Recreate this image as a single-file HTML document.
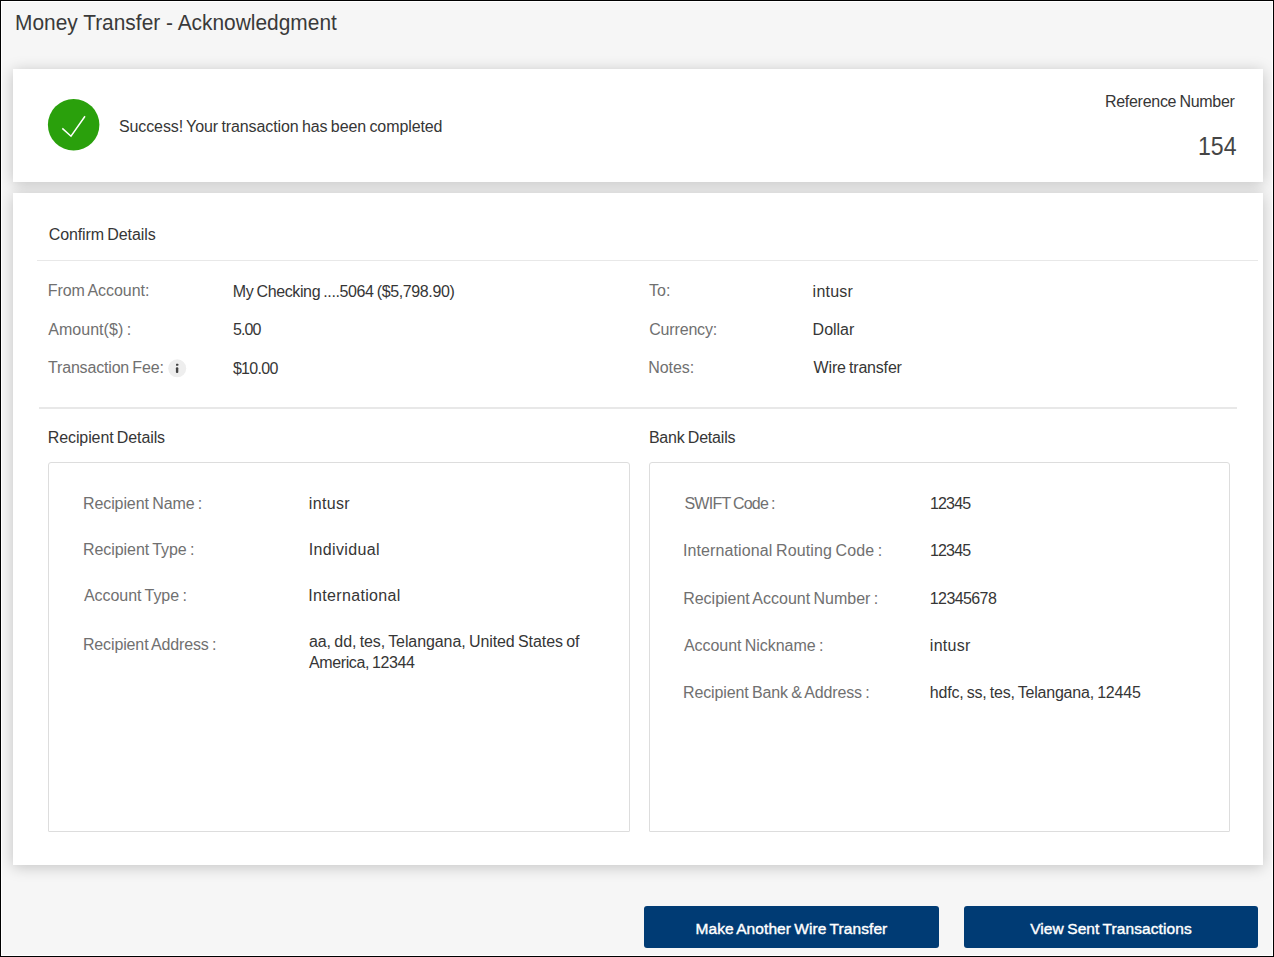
<!DOCTYPE html>
<html><head><meta charset="utf-8">
<style>
html,body{margin:0;padding:0;}
body{width:1274px;height:957px;overflow:hidden;position:relative;background:#000;font-family:"Liberation Sans",sans-serif;}
.frame{position:absolute;left:1px;top:1px;width:1272px;height:955px;background:#fff;}
.page{position:absolute;left:2px;top:2px;width:1270px;height:953px;background:#f6f6f6;overflow:hidden;}
.abs{position:absolute;}
.card{position:absolute;background:#fff;box-shadow:0 2px 14px rgba(0,0,0,0.21);}
.t{position:absolute;white-space:nowrap;}
.hr{position:absolute;background:#e8e8e8;}
.box{position:absolute;border:1px solid #dddddd;border-radius:3px 3px 1px 1px;box-sizing:border-box;}
.btn{position:absolute;background:#003b74;border-radius:3px;}
</style></head><body>
<div class="frame"></div>
<div class="page">
<div class="card" style="left:11px;top:67px;width:1250px;height:113px;"></div>
<div class="card" style="left:11px;top:191px;width:1250px;height:672px;"></div>
<div class="btn" style="left:642px;top:904px;width:295px;height:42px;"></div>
<div class="btn" style="left:962px;top:904px;width:294px;height:42px;"></div>
</div>
<div class="hr" style="left:37px;top:260px;width:1221px;height:1px;"></div>
<div class="hr" style="left:39px;top:407px;width:1198px;height:2px;"></div>
<div class="box" style="left:48px;top:462px;width:582px;height:370px;"></div>
<div class="box" style="left:649px;top:462px;width:581px;height:370px;"></div>
<svg class="abs" style="left:0;top:0" width="1274" height="957">
<circle cx="73.65" cy="124.8" r="25.75" fill="#2aa00c"/>
<polyline points="62.3,128.4 71,136.2 85.0,116.3" fill="none" stroke="#fff" stroke-width="1.5" stroke-linecap="butt" stroke-linejoin="miter"/>
<circle cx="177.2" cy="368.3" r="9" fill="#eeeeee"/>
<rect x="176" y="363.8" width="2.3" height="2" rx="0.5" fill="#444"/>
<rect x="175.9" y="367.2" width="2.4" height="5.8" rx="1" fill="#444"/>
</svg>
<div class="t" style="left:14.77px;top:9px;font-size:22.5px;line-height:28px;color:#3a3a3a;transform:scaleX(0.9290);transform-origin:0 0;">Money Transfer - Acknowledgment</div>
<div class="t" style="left:118.90px;top:117px;font-size:16px;line-height:20px;color:#363636;letter-spacing:-0.094px;word-spacing:-1.0px;">Success! Your transaction has been completed</div>
<div class="t" style="left:1104.90px;top:92px;font-size:16px;line-height:20px;color:#363636;letter-spacing:-0.276px;word-spacing:-1.0px;">Reference Number</div>
<div class="t" style="left:1197.98px;top:131px;font-size:25px;line-height:31px;color:#454545;transform:scaleX(0.9238);transform-origin:0 0;">154</div>
<div class="t" style="left:48.70px;top:225px;font-size:16px;line-height:20px;color:#363636;letter-spacing:-0.097px;word-spacing:-1.0px;">Confirm Details</div>
<div class="t" style="left:47.70px;top:281px;font-size:16px;line-height:20px;color:#707070;letter-spacing:-0.040px;word-spacing:-1.0px;">From Account:</div>
<div class="t" style="left:232.80px;top:282px;font-size:16px;line-height:20px;color:#363636;letter-spacing:-0.373px;word-spacing:-1.0px;">My Checking ....5064 ($5,798.90)</div>
<div class="t" style="left:48.20px;top:320px;font-size:16px;line-height:20px;color:#707070;letter-spacing:0.046px;word-spacing:-1.0px;">Amount($) :</div>
<div class="t" style="left:232.90px;top:320px;font-size:16px;line-height:20px;color:#363636;letter-spacing:-0.914px;word-spacing:-1.0px;">5.00</div>
<div class="t" style="left:48.00px;top:358px;font-size:16px;line-height:20px;color:#707070;letter-spacing:-0.174px;word-spacing:-1.0px;">Transaction Fee:</div>
<div class="t" style="left:232.90px;top:359px;font-size:16px;line-height:20px;color:#363636;letter-spacing:-0.708px;word-spacing:-1.0px;">$10.00</div>
<div class="t" style="left:649.00px;top:281px;font-size:16px;line-height:20px;color:#707070;letter-spacing:0.051px;word-spacing:-1.0px;">To:</div>
<div class="t" style="left:812.60px;top:282px;font-size:16px;line-height:20px;color:#363636;letter-spacing:0.241px;word-spacing:-1.0px;">intusr</div>
<div class="t" style="left:649.20px;top:320px;font-size:16px;line-height:20px;color:#707070;letter-spacing:-0.163px;word-spacing:-1.0px;">Currency:</div>
<div class="t" style="left:812.60px;top:320px;font-size:16px;line-height:20px;color:#363636;letter-spacing:-0.012px;word-spacing:-1.0px;">Dollar</div>
<div class="t" style="left:648.20px;top:358px;font-size:16px;line-height:20px;color:#707070;letter-spacing:-0.059px;word-spacing:-1.0px;">Notes:</div>
<div class="t" style="left:813.60px;top:358px;font-size:16px;line-height:20px;color:#363636;letter-spacing:-0.187px;word-spacing:-1.0px;">Wire transfer</div>
<div class="t" style="left:47.80px;top:428px;font-size:16px;line-height:20px;color:#363636;letter-spacing:-0.110px;word-spacing:-1.0px;">Recipient Details</div>
<div class="t" style="left:648.90px;top:428px;font-size:16px;line-height:20px;color:#363636;letter-spacing:-0.202px;word-spacing:-1.0px;">Bank Details</div>
<div class="t" style="left:83.00px;top:494px;font-size:16px;line-height:20px;color:#707070;letter-spacing:-0.098px;word-spacing:-1.0px;">Recipient Name :</div>
<div class="t" style="left:308.80px;top:494px;font-size:16px;line-height:20px;color:#363636;letter-spacing:0.321px;word-spacing:-1.0px;">intusr</div>
<div class="t" style="left:83.00px;top:540px;font-size:16px;line-height:20px;color:#707070;letter-spacing:-0.065px;word-spacing:-1.0px;">Recipient Type :</div>
<div class="t" style="left:308.80px;top:540px;font-size:16px;line-height:20px;color:#363636;letter-spacing:0.339px;word-spacing:-1.0px;">Individual</div>
<div class="t" style="left:83.90px;top:586px;font-size:16px;line-height:20px;color:#707070;letter-spacing:-0.038px;word-spacing:-1.0px;">Account Type :</div>
<div class="t" style="left:308.20px;top:586px;font-size:16px;line-height:20px;color:#363636;letter-spacing:0.341px;word-spacing:-1.0px;">International</div>
<div class="t" style="left:82.90px;top:635px;font-size:16px;line-height:20px;color:#707070;letter-spacing:-0.127px;word-spacing:-1.0px;">Recipient Address :</div>
<div class="t" style="left:309.00px;top:632px;font-size:16px;line-height:20px;color:#363636;letter-spacing:-0.088px;word-spacing:-1.0px;">aa, dd, tes, Telangana, United States of</div>
<div class="t" style="left:309.00px;top:653px;font-size:16px;line-height:20px;color:#363636;letter-spacing:-0.397px;word-spacing:-1.0px;">America, 12344</div>
<div class="t" style="left:684.40px;top:494px;font-size:16px;line-height:20px;color:#707070;letter-spacing:-0.737px;word-spacing:-1.0px;">SWIFT Code :</div>
<div class="t" style="left:930.00px;top:494px;font-size:16px;line-height:20px;color:#363636;letter-spacing:-0.848px;word-spacing:-1.0px;">12345</div>
<div class="t" style="left:683.00px;top:541px;font-size:16px;line-height:20px;color:#707070;letter-spacing:0.108px;word-spacing:-1.0px;">International Routing Code :</div>
<div class="t" style="left:930.00px;top:541px;font-size:16px;line-height:20px;color:#363636;letter-spacing:-0.848px;word-spacing:-1.0px;">12345</div>
<div class="t" style="left:683.20px;top:589px;font-size:16px;line-height:20px;color:#707070;letter-spacing:-0.010px;word-spacing:-1.0px;">Recipient Account Number :</div>
<div class="t" style="left:929.80px;top:589px;font-size:16px;line-height:20px;color:#363636;letter-spacing:-0.598px;word-spacing:-1.0px;">12345678</div>
<div class="t" style="left:684.00px;top:636px;font-size:16px;line-height:20px;color:#707070;letter-spacing:-0.055px;word-spacing:-1.0px;">Account Nickname :</div>
<div class="t" style="left:929.80px;top:636px;font-size:16px;line-height:20px;color:#363636;letter-spacing:0.281px;word-spacing:-1.0px;">intusr</div>
<div class="t" style="left:683.00px;top:683px;font-size:16px;line-height:20px;color:#707070;letter-spacing:-0.125px;word-spacing:-1.0px;">Recipient Bank &amp; Address :</div>
<div class="t" style="left:929.80px;top:683px;font-size:16px;line-height:20px;color:#363636;letter-spacing:-0.206px;word-spacing:-1.0px;">hdfc, ss, tes, Telangana, 12445</div>
<div class="t" style="left:695.50px;top:919px;font-size:15.5px;line-height:19px;color:#ffffff;letter-spacing:0.071px;word-spacing:-1.0px;-webkit-text-stroke:0.4px #fff;">Make Another Wire Transfer</div>
<div class="t" style="left:1030.20px;top:919px;font-size:15.5px;line-height:19px;color:#ffffff;letter-spacing:0.085px;word-spacing:-1.0px;-webkit-text-stroke:0.4px #fff;">View Sent Transactions</div>
</body></html>
